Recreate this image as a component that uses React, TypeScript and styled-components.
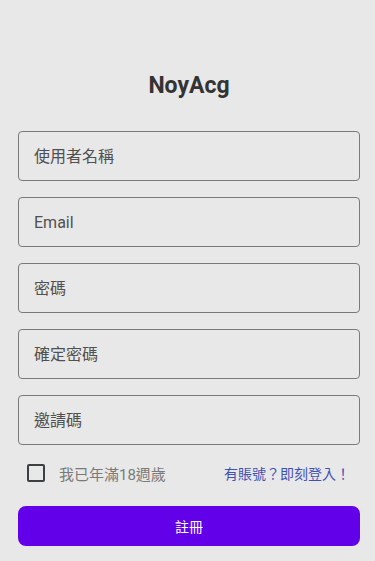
import React from "react"
import styled, { createGlobalStyle } from "styled-components"

const GlobalStyle = createGlobalStyle`
  html, body {
    margin: 0;
    padding: 0;
    background: #e8e8e8;
  }
  body {
    font-family: Roboto, "Noto Sans CJK TC", sans-serif;
  }
`

const fields = ["使用者名稱", "Email", "密碼", "確定密碼", "邀請碼"]

export default function App() {
  return (
    <>
      <GlobalStyle />
      <Page>
        <Title>NoyAcg</Title>
        <Form>
          {fields.map(label => (
            <Field key={label}>
              <FieldInput placeholder={label} />
            </Field>
          ))}
          <OptionsRow>
            <AgeCheck>
              <CheckBox />
              <CheckLabel>我已年滿18週歲</CheckLabel>
            </AgeCheck>
            <LoginLink>有賬號？即刻登入！</LoginLink>
          </OptionsRow>
          <SubmitButton>註冊</SubmitButton>
        </Form>
      </Page>
    </>
  )
}

const Page = styled.div`
  width: 375px;
  min-height: 561px;
  box-sizing: border-box;
  padding: 70px 15px 0 18px;
  background: #e8e8e8;
`

const Title = styled.h1`
  margin: 0;
  text-align: center;
  font-family: Roboto, sans-serif;
  font-size: 23px;
  font-weight: 700;
  line-height: 32px;
  color: #333;
`

const Form = styled.div`
  margin-top: 29px;
  display: flex;
  flex-direction: column;
`

const Field = styled.div`
  height: 50px;
  margin-bottom: 16px;
`

const FieldInput = styled.input`
  width: 100%;
  height: 100%;
  box-sizing: border-box;
  border: 1px solid #7a7a7a;
  border-radius: 4px;
  background: transparent;
  padding: 0 15px;
  font-family: Roboto, "Noto Sans CJK TC", sans-serif;
  font-size: 16px;
  color: #444;
  outline: none;
  &::placeholder {
    color: #505050;
  }
`

const OptionsRow = styled.div`
  display: flex;
  align-items: center;
  justify-content: space-between;
  height: 24px;
  margin-top: 0;
  padding: 0 10px 0 9px;
`

const AgeCheck = styled.label`
  display: flex;
  align-items: center;
  gap: 14px;
`

const CheckBox = styled.span`
  width: 18px;
  height: 18px;
  box-sizing: border-box;
  border: 2px solid #3c4043;
  border-radius: 2px;
`

const CheckLabel = styled.span`
  font-size: 15px;
  color: #7a7a7a;
`

const LoginLink = styled.a`
  font-size: 14px;
  color: #3f51b5;
  cursor: pointer;
`

const SubmitButton = styled.button`
  margin-top: 21px;
  height: 40px;
  border: none;
  border-radius: 8px;
  background: #6200ea;
  color: #fff;
  font-family: Roboto, "Noto Sans CJK TC", sans-serif;
  font-size: 14px;
`
